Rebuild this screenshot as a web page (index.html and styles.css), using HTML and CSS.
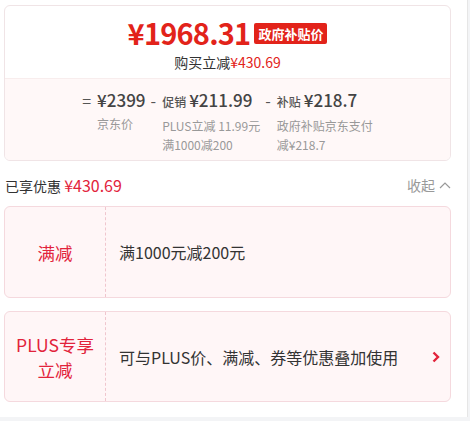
FILE: index.html
```html
<!DOCTYPE html>
<html lang="zh-CN">

<head>
    <meta charset="UTF-8">
    <meta name="viewport" content="width=device-width, initial-scale=1.0">
    <title>价格明细</title>
    <link rel="stylesheet" href="styles.css">
</head>

<body>
    <div class="page">
        <!-- 到手价 -->
        <div class="price-card">
            <div class="price-top">
                <div class="price-main">
                    <span class="price-num">¥1968.31</span>
                    <span class="price-tag">政府补贴价</span>
                </div>
                <div class="price-save">购买立减<em>¥430.69</em></div>
            </div>
            <div class="price-calc">
                <div class="calc-col">
                    <span class="calc-sign">=</span>
                    <div class="calc-body">
                        <div class="calc-val">¥2399</div>
                        <div class="calc-desc">京东价</div>
                    </div>
                </div>
                <div class="calc-col">
                    <span class="calc-sign">-</span>
                    <div class="calc-body">
                        <div class="calc-val"><small>促销</small>¥211.99</div>
                        <div class="calc-desc">PLUS立减 11.99元<br>满1000减200</div>
                    </div>
                </div>
                <div class="calc-col">
                    <span class="calc-sign">-</span>
                    <div class="calc-body">
                        <div class="calc-val"><small>补贴</small>¥218.7</div>
                        <div class="calc-desc">政府补贴京东支付<br>减¥218.7</div>
                    </div>
                </div>
            </div>
        </div>

        <!-- 已享优惠 -->
        <div class="discount-head">
            <div class="discount-total">已享优惠 <em>¥430.69</em></div>
            <div class="discount-fold">收起
                <svg width="12" height="8" viewBox="0 0 12 8">
                    <path d="M1 7 L6 2 L11 7" fill="none" stroke="#999" stroke-width="1.2" />
                </svg>
            </div>
        </div>

        <ul class="promo-list">
            <li class="promo">
                <div class="promo-name">满减</div>
                <div class="promo-text">满1000元减200元</div>
            </li>
            <li class="promo">
                <div class="promo-name">PLUS专享<br>立减</div>
                <div class="promo-text">可与PLUS价、满减、券等优惠叠加使用</div>
                <svg class="promo-arrow" width="8" height="12" viewBox="0 0 8 12">
                    <path d="M1.5 1.5 L6 6 L1.5 10.5" fill="none" stroke="#e2233b" stroke-width="2.4" />
                </svg>
            </li>
        </ul>
    </div>
</body>

</html>
```

FILE: styles.css
```css
* {
    margin: 0;
    padding: 0;
    box-sizing: border-box;
}

ul {
    list-style: none;
}

em {
    font-style: normal;
}

body {
    background-color: #f3f4f6;
    font-family: "Microsoft YaHei", "Noto Sans CJK SC", "Noto Sans", sans-serif;
    color: #333;
}

.page {
    width: 468px;
    height: 417px;
    padding: 5px 16px 0 4px;
    background-color: #fff;
    border-right: 1px solid #e6e6e6;
}

.price-card {
    border: 1px solid #f0e4e6;
    border-radius: 6px;
    overflow: hidden;
}

.price-top {
    height: 72px;
    padding-top: 8px;
    text-align: center;
}

.price-main {
    display: flex;
    justify-content: center;
    align-items: center;
    gap: 4px;
    height: 36px;
}

.price-num {
    font-size: 29px;
    line-height: 36px;
    font-weight: bold;
    color: #e2231a;
    letter-spacing: -0.8px;
}

.price-tag {
    height: 21px;
    line-height: 21px;
    margin-top: 2px;
    padding: 0 4px;
    border-radius: 2px;
    background-color: #e2231a;
    color: #fff;
    font-size: 13px;
    font-weight: bold;
}

.price-save {
    margin-top: 2px;
    font-size: 14px;
    line-height: 20px;
}

.price-save em {
    color: #e2231a;
}

.price-calc {
    display: flex;
    justify-content: center;
    height: 82px;
    padding: 9px 0 0 0;
    background-color: #fff8f8;
    border-top: 1px solid #f8eded;
}

.calc-col {
    display: flex;
    margin-right: 5px;
}

.calc-col:last-child {
    margin-right: 0;
}

.calc-sign {
    margin-right: 6px;
    font-size: 16px;
    line-height: 24px;
    color: #555;
}

.calc-val {
    font-size: 17px;
    line-height: 24px;
    font-weight: 500;
    color: #444;
}

.calc-val small {
    font-size: 12px;
    margin-right: 3px;
    color: #555;
}

.calc-desc {
    margin-top: 2px;
    font-size: 12px;
    line-height: 19px;
    color: #999;
}

.discount-head {
    display: flex;
    justify-content: space-between;
    align-items: center;
    height: 22px;
    margin: 13px 0 10px 1px;
    font-size: 14px;
}

.discount-total em {
    font-size: 16px;
    color: #e2233b;
}

.discount-fold {
    display: flex;
    align-items: center;
    gap: 4px;
    color: #999;
}

.promo-list {
    display: flex;
    flex-direction: column;
    gap: 13px;
}

.promo {
    display: flex;
    align-items: center;
    height: 92px;
    background-color: #fff6f7;
    border: 1px solid #f5d9de;
    border-radius: 6px;
}

.promo+.promo {
    height: 91px;
}

.promo-name {
    align-self: stretch;
    display: flex;
    align-items: center;
    justify-content: center;
    width: 101px;
    border-right: 1px dashed #f0c6ce;
    font-size: 17.5px;
    line-height: 25px;
    color: #e2233b;
    text-align: center;
}

.promo-text {
    flex: 1;
    padding-left: 13px;
    font-size: 16px;
    color: #333;
}

.promo-arrow {
    margin-right: 10px;
}
```
